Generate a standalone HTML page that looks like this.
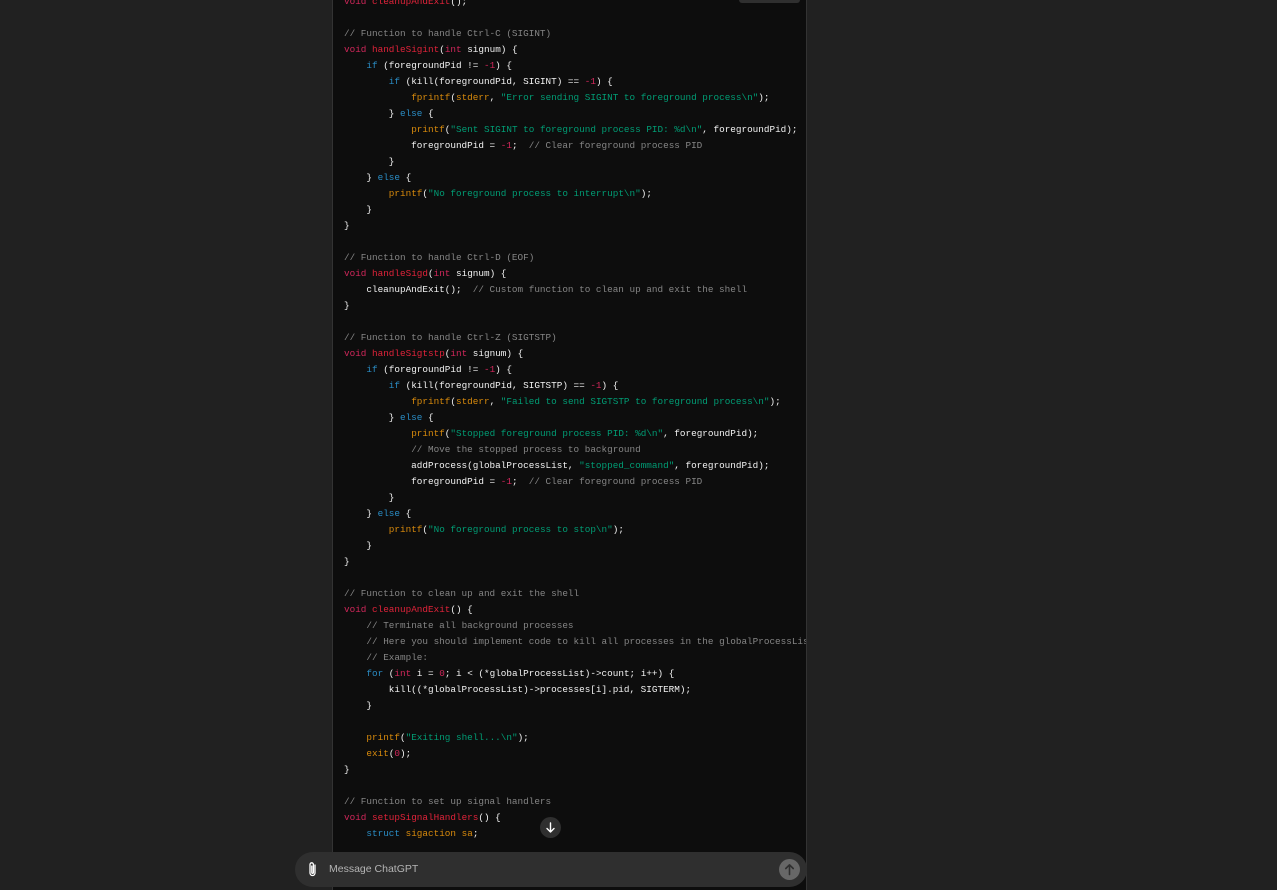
<!DOCTYPE html>
<html><head><meta charset="utf-8"><style>
body{margin:0;width:1277px;height:888px;background:#212121;overflow:hidden;position:relative;font-family:"Liberation Sans",sans-serif}
.box{position:absolute;left:332px;top:-10px;width:473px;height:900px;background:#0d0d0d;border-left:1px solid #333;border-right:1px solid #333;overflow:hidden}
pre{position:absolute;left:11px;top:4px;margin:0;font-family:"Liberation Mono",monospace;font-size:9.33px;line-height:16px;color:#f2f2f2;white-space:pre}
.k{color:#d0275a}.f{color:#e0233a}.b{color:#2a8cc4}.o{color:#d88a0c}.s{color:#019c74}.c{color:#858585}.n{color:#d0275a}
.tag{position:absolute;left:739px;top:-5px;width:61px;height:8px;background:#2f2f2f;border-radius:3px}
.inp{position:absolute;left:295px;top:852px;width:512px;height:35px;background:#2f2f2f;border-radius:18px}
.inp .t{position:absolute;left:34px;top:11px;font-size:10.5px;color:#b4b4b4}
.send{position:absolute;left:484px;top:7px;width:21px;height:21px;border-radius:50%;background:#676767}
.down{position:absolute;left:540px;top:817px;width:21px;height:21px;border-radius:50%;background:#2f2f2f}
</style></head><body>
<div class="box"><pre><span class="k">void</span> <span class="f">cleanupAndExit</span>();

<span class="c">// Function to handle Ctrl-C (SIGINT)</span>
<span class="k">void</span> <span class="f">handleSigint</span>(<span class="k">int</span> signum) {
    <span class="b">if</span> (foregroundPid != <span class="n">-1</span>) {
        <span class="b">if</span> (kill(foregroundPid, SIGINT) == <span class="n">-1</span>) {
            <span class="o">fprintf</span>(<span class="o">stderr</span>, <span class="s">"Error sending SIGINT to foreground process\n"</span>);
        } <span class="b">else</span> {
            <span class="o">printf</span>(<span class="s">"Sent SIGINT to foreground process PID: %d\n"</span>, foregroundPid);
            foregroundPid = <span class="n">-1</span>;  <span class="c">// Clear foreground process PID</span>
        }
    } <span class="b">else</span> {
        <span class="o">printf</span>(<span class="s">"No foreground process to interrupt\n"</span>);
    }
}

<span class="c">// Function to handle Ctrl-D (EOF)</span>
<span class="k">void</span> <span class="f">handleSigd</span>(<span class="k">int</span> signum) {
    cleanupAndExit();  <span class="c">// Custom function to clean up and exit the shell</span>
}

<span class="c">// Function to handle Ctrl-Z (SIGTSTP)</span>
<span class="k">void</span> <span class="f">handleSigtstp</span>(<span class="k">int</span> signum) {
    <span class="b">if</span> (foregroundPid != <span class="n">-1</span>) {
        <span class="b">if</span> (kill(foregroundPid, SIGTSTP) == <span class="n">-1</span>) {
            <span class="o">fprintf</span>(<span class="o">stderr</span>, <span class="s">"Failed to send SIGTSTP to foreground process\n"</span>);
        } <span class="b">else</span> {
            <span class="o">printf</span>(<span class="s">"Stopped foreground process PID: %d\n"</span>, foregroundPid);
            <span class="c">// Move the stopped process to background</span>
            addProcess(globalProcessList, <span class="s">"stopped_command"</span>, foregroundPid);
            foregroundPid = <span class="n">-1</span>;  <span class="c">// Clear foreground process PID</span>
        }
    } <span class="b">else</span> {
        <span class="o">printf</span>(<span class="s">"No foreground process to stop\n"</span>);
    }
}

<span class="c">// Function to clean up and exit the shell</span>
<span class="k">void</span> <span class="f">cleanupAndExit</span>() {
    <span class="c">// Terminate all background processes</span>
    <span class="c">// Here you should implement code to kill all processes in the globalProcessList</span>
    <span class="c">// Example:</span>
    <span class="b">for</span> (<span class="k">int</span> i = <span class="n">0</span>; i &lt; (*globalProcessList)-&gt;count; i++) {
        kill((*globalProcessList)-&gt;processes[i].pid, SIGTERM);
    }

    <span class="o">printf</span>(<span class="s">"Exiting shell...\n"</span>);
    <span class="o">exit</span>(<span class="n">0</span>);
}

<span class="c">// Function to set up signal handlers</span>
<span class="k">void</span> <span class="f">setupSignalHandlers</span>() {
    <span class="b">struct</span> <span class="o">sigaction</span> <span class="o">sa</span>;
</pre></div>
<div class="tag"></div>
<div class="down"><svg width="21" height="21" viewBox="0 0 21 21"><path d="M10.5 6v9M7 11.5l3.5 3.5 3.5-3.5" stroke="#fff" stroke-width="1.4" fill="none" stroke-linecap="round" stroke-linejoin="round"/></svg></div>
<div class="inp">
<svg style="position:absolute;left:12px;top:9px" width="12" height="17" viewBox="0 0 12 17"><path d="M8 4v8a2.5 2.5 0 0 1-5 0V3.5a1.7 1.7 0 0 1 3.4 0V11.5a.8.8 0 0 1-1.6 0V5" stroke="#fff" stroke-width="1.3" fill="none" stroke-linecap="round"/></svg>
<div class="t">Message ChatGPT</div>
<div class="send"><svg width="21" height="21" viewBox="0 0 21 21"><path d="M10.5 15.5V6M6.8 9.5l3.7-3.7 3.7 3.7" stroke="#2f2f2f" stroke-width="1.6" fill="none" stroke-linecap="round" stroke-linejoin="round"/></svg></div>
</div>
</body></html>
